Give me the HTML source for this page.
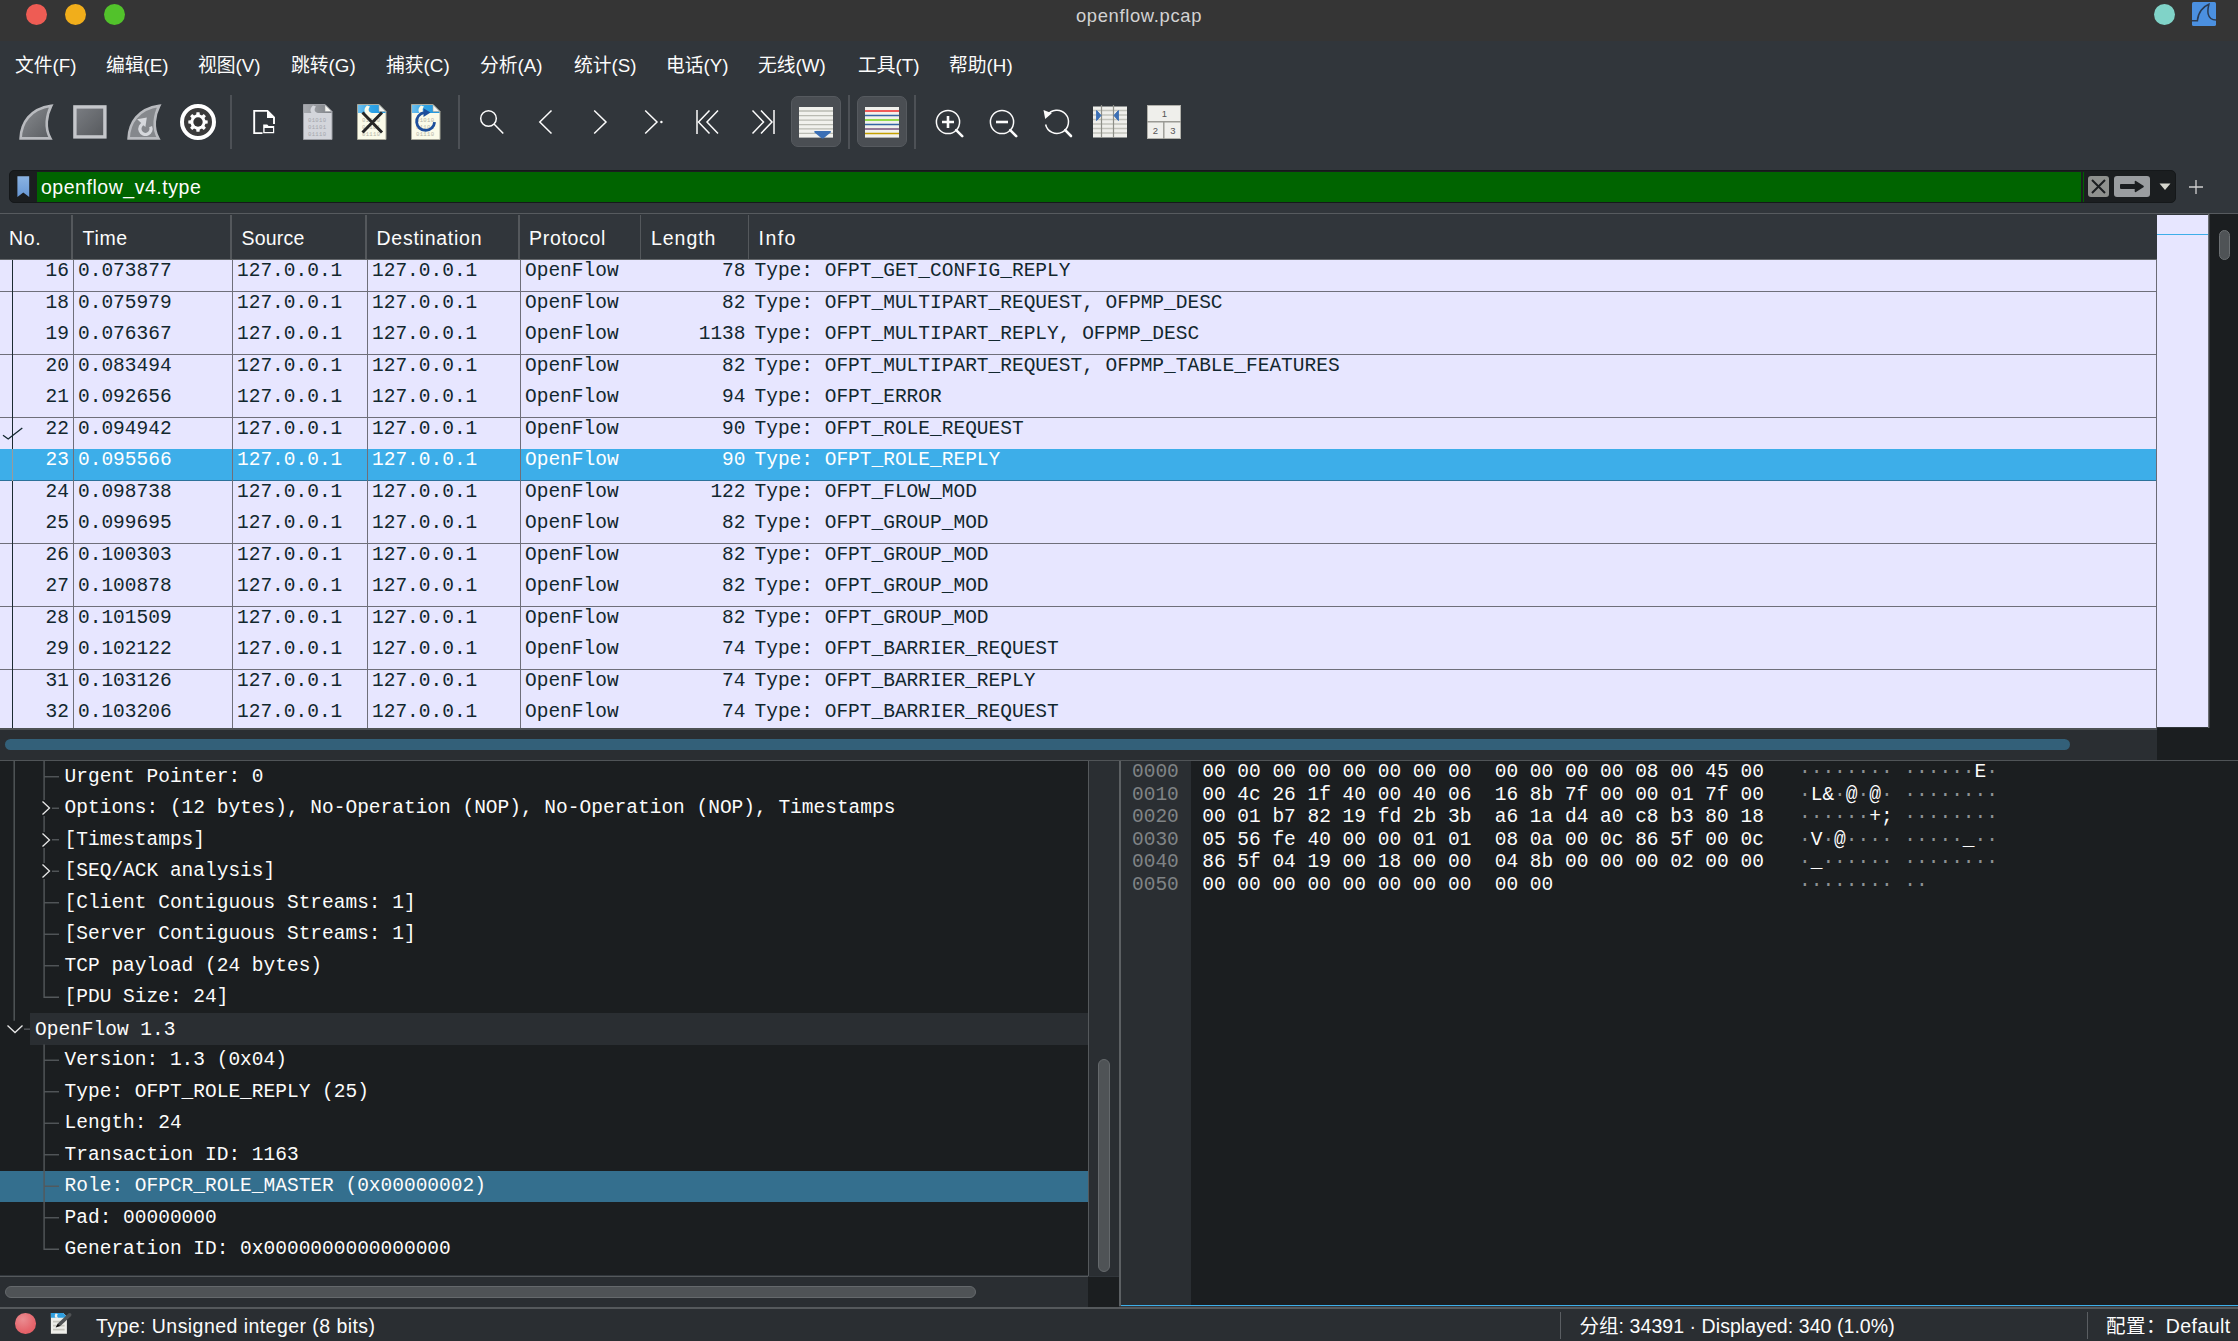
<!DOCTYPE html>
<html lang="zh-CN"><head><meta charset="utf-8"><title>openflow.pcap</title>
<style>
html,body{margin:0;padding:0}
body{width:2238px;height:1341px;overflow:hidden;background:#31363b;position:relative;
 font-family:"Liberation Sans","Noto Sans CJK SC",sans-serif;font-size:19.5px;color:#fcfcfc;letter-spacing:0.45px}
i,b,u{font-style:normal;font-weight:normal;text-decoration:none}
div,span,i,b,svg{position:absolute;box-sizing:border-box}
/* title */
#titlebar{left:0;top:0;width:2238px;height:41px;background:#353535}
.tl{top:3.5px;margin-left:0.5px;width:21px;height:21px;border-radius:50%}
#title{left:0;width:2238px;top:3px;height:26px;line-height:26px;text-align:center;font-size:18.4px;color:#d2d2d2;letter-spacing:0.65px;padding-left:40px}
#wsicon{left:2192px;top:2px}
/* menubar */
#menubar{left:0;top:41px;width:2238px;height:48px}
.mi{top:10.7px;height:28px;line-height:28px;white-space:nowrap;font-size:18.8px;letter-spacing:0}
/* toolbar */
#toolbar{left:0;top:89px;width:2238px;height:70px}
/* filter */
#filterbar{left:0;top:165px;width:2238px;height:44px}
#fbox{left:9px;top:5px;width:2167.4px;height:33px;background:#1b1e20;border:1px solid #15181a;border-radius:5px}
#bm{left:6.5px;top:5.2px}
#fgreen{left:27px;top:1px;width:2044.2px;height:30px;background:#006400}
#fgreen:after{content:"";position:absolute;left:2045.6px;top:0;width:1.2px;height:30px;background:#006400}
#ftext{left:4px;top:1.2px;height:30px;line-height:29px;white-space:nowrap;font-size:19.5px;letter-spacing:0.53px}
#fx{left:2078px;top:5px;width:21px;height:21px;background:#8f918e;border-radius:3px}
#fgo{left:2104px;top:5px;width:36px;height:21px;background:#9a9da0;border-radius:3px}
#fdd{left:2149px;top:12px}
#fplus{left:2188px;top:14px}
/* packet list */
#topline{left:0;top:212.8px;width:2238px;height:1.5px;background:#575b5f;z-index:3}
#plist{left:0;top:214px;width:2157px;height:514px;overflow:hidden}
#phead{left:0;top:0;width:2157px;height:46px;background:#31363b;border-bottom:1px solid #63676a}
.ht{top:10px;height:28px;line-height:28px;white-space:nowrap}
.hs{top:1px;width:1.6px;height:44px;background:#54585c}
#prows{left:0;top:46px;width:2157px;height:468px;background:#e7e6ff;overflow:hidden;
 font-family:"Liberation Mono",monospace;font-size:19.5px;letter-spacing:0;color:#12272e;border-right:1px solid #6b6b75}
.pr{left:0;width:2156px;height:31.5px;line-height:22px;white-space:pre}
.pr.sep{border-bottom:1px solid #6f6f7a}
.pr.sel{background:#3daee9;color:#fff;border-bottom-color:#2c729b}
.pr span{top:0}
.c0{right:2087px}.c1{left:78px}.c2{left:237px}.c3{left:372px}.c4{left:525px}.c5{right:1410.5px}.c6{left:754.5px}
.vl{top:0;width:1px;height:469px;background:#6f6f7a}
#relline{left:11.9px;top:0;width:1.3px;height:469px;background:#1c2b33}
#relsel{left:11.9px;top:189px;width:1.3px;height:31.5px;background:#9a9a9a}
#tick{left:0;top:167px}
#minimap{left:2157px;top:215px;width:51.2px;height:512.4px;background:#e7e6ff}
#minimap i{left:0;top:19px;width:51px;height:1.2px;background:#3daee9}
#pvs{left:2208px;top:214px;width:30px;height:515px;background:linear-gradient(to right,#8a8c93 0,#4a4d50 1px,#25282a 2px,#1b1e20 2.5px)}
#pvs i{left:10.6px;top:16px;width:11.6px;height:30px;border-radius:6px;background:#4f5356;border:1px solid #6c7073}
#phs{left:0;top:728px;width:2156.5px;height:32px;background:#2a2e32;border-top:2px solid #4d5154}
#pcorner{left:2156.5px;top:727.5px;width:82px;height:33px;background:#1b1e20}
#phs i{left:5px;top:8.8px;width:2065px;height:11.5px;border-radius:6px;background:#336079}
/* details */
#details{left:0;top:760px;width:1088px;height:515px;background:#1b1e20;overflow:hidden;
 font-family:"Liberation Mono",monospace;font-size:19.5px;letter-spacing:0;color:#fcfcfc;border-top:1px solid #45494d}
.tr{left:0;width:1088px;height:31.5px;line-height:31.5px;white-space:pre}
.tr.tsel{background:#346f8e}
.hdrbg{left:30px;top:0;width:1058px;height:31.5px;background:#2a2e32}
.tt{top:0.9px}
.l2{left:64.6px}.l1{left:35px;top:1.7px}
#tlines{left:0;top:0}
.arr{}
#dvline{left:1088px;top:760px;width:1px;height:516px;background:#55595c}
#dvs{left:1089px;top:760px;width:30px;height:516px;background:#2a2e32}
#dvs i{left:9px;top:299px;width:12px;height:212.6px;border-radius:6px;background:#4f5356;border:1px solid #65696c}
#splitline{left:1119px;top:760px;width:2px;height:546px;background:#5c6063}
#dhs{left:0;top:1276px;width:1088px;height:32px;background:#2a2e32;border-top:1px solid #55595c}
#dhs i{left:5px;top:9.2px;width:971px;height:11.5px;border-radius:6px;background:#4f5356;border:1px solid #65696c}
#dcorner{left:1088px;top:1277px;width:31px;height:30px;background:#1b1e20}
/* hex */
#hex{left:1121px;top:760px;width:1117px;height:545px;background:#1b1e20;overflow:hidden;
 font-family:"Liberation Mono",monospace;font-size:19.5px;letter-spacing:0;color:#fcfcfc;border-top:1px solid #45494d}
#hexoffbg{left:0;top:0;width:70px;height:545px;background:#2a2e32}
.hr{left:0;width:1117px;height:22.5px;line-height:22.5px;white-space:pre}
.hr span{top:0}
.ho{left:11px;color:#808486}
.hb{left:81.2px}
.ha{left:678px}
.ha u{color:#8d9193}
#hexblue{left:1121px;top:1305px;width:1117px;height:1.1px;background:#3daee9}
/* status */
#statusline{left:0;top:1307px;width:2238px;height:1.5px;background:#55595c}
#status{left:0;top:1309px;width:2238px;height:32px;background:#2a2e32}
#reddot{left:15.2px;top:4.1px;width:20.6px;height:20.6px;border-radius:50%;background:radial-gradient(circle at 38% 30%,#ea8d91,#e5686f 55%,#e1545c)}
#sedit{left:50px;top:3px}
#stext{left:96px;top:2px;height:30px;line-height:30px;white-space:nowrap}
.ss{top:3px;width:1.2px;height:27px;background:#5a5e62}
#spk{left:1579.5px;top:2px;height:30px;line-height:30px;white-space:nowrap;letter-spacing:0.06px}
#sprof{left:2106px;top:2px;height:30px;line-height:30px;white-space:nowrap}
.tsep{top:6px;width:2px;height:54px;background:#4d5156}
.tbtn{width:50px;height:51px;border-radius:7px;background:#4a4e53;border:1px solid #565a5f}
#midline{left:0;top:760px;width:2238px;height:1.2px;background:#505457}

</style></head>
<body>
<div id="titlebar">
<span class="tl" style="left:25px;background:#ee5c54"></span>
<span class="tl" style="left:64px;background:#f1ae1b"></span>
<span class="tl" style="left:103px;background:#52c22b"></span>
<div id="title">openflow.pcap</div>
<span class="tl" style="left:2153.9px;top:4px;background:#80d3c8"></span>
<svg id="wsicon" width="24" height="24" viewBox="0 0 24 24"><rect x="0" y="0" width="24" height="24" rx="1.6" fill="#4b90e0"/><path d="M0 18.8 H5.4 C6 10.5 11 4.5 16.9 2.2 C15.4 8 14.2 17.6 24 18.1" fill="none" stroke="#2a3b52" stroke-width="1.5"/></svg>
</div>
<div id="menubar"><span class="mi" style="left:15px">文件(F)</span><span class="mi" style="left:106px">编辑(E)</span><span class="mi" style="left:198px">视图(V)</span><span class="mi" style="left:291px">跳转(G)</span><span class="mi" style="left:386px">捕获(C)</span><span class="mi" style="left:480px">分析(A)</span><span class="mi" style="left:574px">统计(S)</span><span class="mi" style="left:666px">电话(Y)</span><span class="mi" style="left:758px">无线(W)</span><span class="mi" style="left:858px">工具(T)</span><span class="mi" style="left:949px">帮助(H)</span></div>
<div id="toolbar">
<svg width="0" height="0" style="left:0;top:0"><defs>
<linearGradient id="gfin" x1="0" y1="0" x2="1" y2="1"><stop offset="0" stop-color="#8a8d91"/><stop offset="1" stop-color="#5a5d61"/></linearGradient>
<linearGradient id="gsq" x1="0" y1="0" x2="1" y2="1"><stop offset="0" stop-color="#7b7e83"/><stop offset="1" stop-color="#55585c"/></linearGradient>
<linearGradient id="gblue" x1="0" y1="0" x2="1" y2="0"><stop offset="0" stop-color="#6fc0ee"/><stop offset="0.5" stop-color="#2ea3e6"/><stop offset="1" stop-color="#2396dc"/></linearGradient>
<linearGradient id="ggray" x1="0" y1="0" x2="1" y2="0"><stop offset="0" stop-color="#a8abb0"/><stop offset="1" stop-color="#7f8287"/></linearGradient>
</defs></svg>
<svg style="left:18px;top:14px" width="36" height="38" viewBox="0 0 36 38" ><path d="M2.6 35.4 C3.2 20 12 5.8 33.2 2.8 C28.4 12 26.4 25 32.4 35.4 Z" fill="url(#gfin)" stroke="#b9bbbf" stroke-width="2.6" stroke-linejoin="miter" stroke-miterlimit="2.4"/></svg>
<svg style="left:73px;top:16px" width="34" height="34" viewBox="0 0 34 34" ><rect x="1.9" y="1.9" width="30" height="30" fill="url(#gsq)" stroke="#c5c7cb" stroke-width="3.4"/></svg>
<svg style="left:126px;top:14px" width="36" height="38" viewBox="0 0 36 38" ><path d="M2.6 35.4 C3.2 20 12 5.8 33.2 2.8 C28.4 12 26.4 25 32.4 35.4 Z" fill="#85888c" stroke="#b9bbbf" stroke-width="2.6" stroke-miterlimit="2.4"/><path d="M17.6 20.6 A5.6 5.6 0 1 0 24.6 23.6" fill="none" stroke="#d6d8dc" stroke-width="3.2"/><path d="M11.2 16.2 L20.8 14.6 L19.4 24 Z" fill="#d6d8dc"/></svg>
<svg style="left:179px;top:14px" width="38" height="38" viewBox="0 0 38 38" ><circle cx="19" cy="19" r="16" fill="#3b3b3b" stroke="#ffffff" stroke-width="4"/><path d="M28.68 17.47 L28.68 20.53 L26.39 20.77 L25.48 22.97 L26.93 24.76 L24.76 26.93 L22.97 25.48 L20.77 26.39 L20.53 28.68 L17.47 28.68 L17.23 26.39 L15.03 25.48 L13.24 26.93 L11.07 24.76 L12.52 22.97 L11.61 20.77 L9.32 20.53 L9.32 17.47 L11.61 17.23 L12.52 15.03 L11.07 13.24 L13.24 11.07 L15.03 12.52 L17.23 11.61 L17.47 9.32 L20.53 9.32 L20.77 11.61 L22.97 12.52 L24.76 11.07 L26.93 13.24 L25.48 15.03 L26.39 17.23 Z" fill="#fff"/><circle cx="19" cy="19" r="4.7" fill="#333"/></svg>
<i class="tsep" style="left:229.8px"></i>
<svg style="left:252px;top:20px" width="24" height="26" viewBox="0 0 24 26" ><path d="M10.5 24.1 H2.2 V1.9 H15.5 L22 8.4 V15" fill="none" stroke="#fff" stroke-width="1.9"/><path d="M15 1.5 L22.5 9 H15 Z" fill="#fff"/><path d="M11.2 24.2 V15.6 H15.2 L16.6 17 H22.2 V24.2 Z M12.6 19 V23 H21 V19 Z" fill="#fff" fill-rule="evenodd"/></svg>
<svg style="left:303px;top:15px" width="30" height="36" viewBox="0 0 30 36" ><path d="M0.5 0.5 H22 L29 7.5 V35.5 H0.5 Z" fill="#d3d5db" stroke="#9c9ea4" stroke-width="1"/><path d="M1 1 H22 L28.5 7.5 V9 H1 Z" fill="url(#ggray)"/><path d="M10 1.5 C7 4 7 7 8.5 9 H15 C12.5 8.5 10 6 13 2.5 Z" fill="#d3d5db"/><path d="M22 0.8 L28.7 7.5 H22 Z" fill="#f4f4f0" stroke="#9c9ea4" stroke-width="0.6"/><g font-family="Liberation Mono,monospace" font-size="5.6" fill="#a4a6ac" letter-spacing="0.3"><text x="5" y="18">01010</text><text x="5" y="25">01101</text><text x="5" y="32">01110</text></g></svg>
<svg style="left:357px;top:15px" width="30" height="36" viewBox="0 0 30 36" ><path d="M0.5 0.5 H22 L29 7.5 V35.5 H0.5 Z" fill="#fbfbe9" stroke="#a8a89a" stroke-width="1"/><path d="M1 1 H22 L28.5 7.5 V9 H1 Z" fill="url(#gblue)"/><path d="M10 1.5 C7 4 7 7 8.5 9 H15 C12.5 8.5 10 6 13 2.5 Z" fill="#fbfbe9"/><path d="M22 0.8 L28.7 7.5 H22 Z" fill="#f4f4f0" stroke="#a8a89a" stroke-width="0.6"/><g font-family="Liberation Mono,monospace" font-size="5.6" fill="#b4b4a6" letter-spacing="0.3"><text x="5" y="18">01010</text><text x="5" y="25">01101</text><text x="5" y="32">01110</text></g><path d="M5.5 8.5 L25 28.5 M25 8.5 L5.5 28.5" stroke="#262626" stroke-width="3" stroke-linecap="butt"/></svg>
<svg style="left:411px;top:15px" width="30" height="36" viewBox="0 0 30 36" ><path d="M0.5 0.5 H22 L29 7.5 V35.5 H0.5 Z" fill="#fbfbe9" stroke="#a8a89a" stroke-width="1"/><path d="M1 1 H22 L28.5 7.5 V9 H1 Z" fill="url(#gblue)"/><path d="M10 1.5 C7 4 7 7 8.5 9 H15 C12.5 8.5 10 6 13 2.5 Z" fill="#fbfbe9"/><path d="M22 0.8 L28.7 7.5 H22 Z" fill="#f4f4f0" stroke="#a8a89a" stroke-width="0.6"/><g font-family="Liberation Mono,monospace" font-size="5.6" fill="#b4b4a6" letter-spacing="0.3"><text x="5" y="18">01010</text><text x="5" y="25">01101</text><text x="5" y="32">01110</text></g><path d="M13 8.6 A9 9 0 1 0 23.6 18.2" fill="none" stroke="#1d4f9c" stroke-width="2.8"/><path d="M12.5 4.2 L19.5 8.5 L12.5 13 Z" fill="#1d4f9c"/></svg>
<i class="tsep" style="left:458px"></i>
<svg style="left:478px;top:19px" width="28" height="28" viewBox="0 0 28 28" ><circle cx="10.5" cy="10.5" r="7.8" fill="none" stroke="#fcfcfc" stroke-width="1.5"/><path d="M16 16 L25.3 25.5" stroke="#fcfcfc" stroke-width="1.5"/></svg>
<svg style="left:536px;top:19px" width="20" height="28" viewBox="0 0 20 28" ><path d="M15.5 2.5 L3.8 14 L15.5 25.5" fill="none" stroke="#fcfcfc" stroke-width="1.5"/></svg>
<svg style="left:590px;top:19px" width="20" height="28" viewBox="0 0 20 28" ><path d="M4.2 2.5 L16 14 L4.2 25.5" fill="none" stroke="#fcfcfc" stroke-width="1.5"/></svg>
<svg style="left:642px;top:19px" width="24" height="28" viewBox="0 0 24 28" ><path d="M3.2 2.5 L15 14 L3.2 25.5" fill="none" stroke="#fcfcfc" stroke-width="1.5"/><circle cx="19.4" cy="14" r="1.2" fill="#fcfcfc"/></svg>
<svg style="left:694px;top:19px" width="28" height="28" viewBox="0 0 28 28" ><path d="M3 2 V26" stroke="#fcfcfc" stroke-width="1.5"/><path d="M15.5 2.5 L4.5 14 L15.5 25.5 M24 2.5 L13 14 L24 25.5" fill="none" stroke="#fcfcfc" stroke-width="1.5"/></svg>
<svg style="left:750px;top:19px" width="28" height="28" viewBox="0 0 28 28" ><path d="M24 2 V26" stroke="#fcfcfc" stroke-width="1.5"/><path d="M2.5 2.5 L13.5 14 L2.5 25.5 M11 2.5 L22 14 L11 25.5" fill="none" stroke="#fcfcfc" stroke-width="1.5"/></svg>
<b class="tbtn" style="left:791px;top:7.4px"></b>
<svg style="left:799px;top:17.700000000000003px" width="34" height="32" viewBox="0 0 34 32" ><rect x="0" y="0" width="34" height="30.6" fill="#f1f1ed"/><path d="M0 4.0 H34" stroke="#b9bab2" stroke-width="1.4"/><path d="M0 8.6 H34" stroke="#b9bab2" stroke-width="1.4"/><path d="M0 13.1 H34" stroke="#b9bab2" stroke-width="1.4"/><path d="M0 17.6 H34" stroke="#b9bab2" stroke-width="1.4"/><path d="M0 21.9 H34" stroke="#b9bab2" stroke-width="1.4"/><path d="M0 26.4 H34" stroke="#b9bab2" stroke-width="1.4"/><path d="M16.2 24 H31 Q32.8 24 31.6 25.4 L25 31 Q23.6 32 22.2 31 L15.6 25.4 Q14.4 24 16.2 24 Z" fill="#3b6fb5"/></svg>
<i class="tsep" style="left:848px"></i>
<b class="tbtn" style="left:857px;top:7.4px"></b>
<svg style="left:865px;top:17.700000000000003px" width="34" height="31" viewBox="0 0 34 31" ><rect x="0" y="0" width="34" height="30.6" fill="#f1f1ed"/><path d="M0 4.0 H34" stroke="#ef2929" stroke-width="1.5"/><path d="M0 8.6 H34" stroke="#3465a4" stroke-width="1.5"/><path d="M0 13.1 H34" stroke="#73d216" stroke-width="1.5"/><path d="M0 17.6 H34" stroke="#3465a4" stroke-width="1.5"/><path d="M0 21.9 H34" stroke="#75507b" stroke-width="1.5"/><path d="M0 26.4 H34" stroke="#c4a000" stroke-width="1.5"/></svg>
<i class="tsep" style="left:914px"></i>
<svg style="left:934px;top:19px" width="30" height="30" viewBox="0 0 30 30" ><circle cx="14" cy="14" r="11.6" fill="none" stroke="#fcfcfc" stroke-width="1.5"/><path d="M22.2 22.2 L28.2 28.2" stroke="#fcfcfc" stroke-width="2.6" stroke-linecap="round"/><path d="M8 14 H20 M14 8 V20" stroke="#fcfcfc" stroke-width="2.6"/></svg>
<svg style="left:988px;top:19px" width="30" height="30" viewBox="0 0 30 30" ><circle cx="14" cy="14" r="11.6" fill="none" stroke="#fcfcfc" stroke-width="1.5"/><path d="M22.2 22.2 L28.2 28.2" stroke="#fcfcfc" stroke-width="2.6" stroke-linecap="round"/><path d="M8 14 H20" stroke="#fcfcfc" stroke-width="2.6"/></svg>
<svg style="left:1041px;top:17px" width="32" height="32" viewBox="0 0 32 32" ><path d="M6.2 9.5 A11.6 11.6 0 1 1 4.6 18.5" fill="none" stroke="#fcfcfc" stroke-width="1.5"/><path d="M2.5 4 L10.8 7.2 L4.2 13 Z" fill="#fcfcfc"/><path d="M24.2 24.2 L30 30" stroke="#fcfcfc" stroke-width="2.6" stroke-linecap="round"/></svg>
<svg style="left:1093px;top:16px" width="34" height="33" viewBox="0 0 34 33" ><rect x="0" y="1.5" width="34" height="31" fill="#efefeb"/><path d="M0 5.5 H34" stroke="#c2c3bb" stroke-width="1.3"/><path d="M0 10 H34" stroke="#c2c3bb" stroke-width="1.3"/><path d="M0 14.5 H34" stroke="#c2c3bb" stroke-width="1.3"/><path d="M0 19 H34" stroke="#c2c3bb" stroke-width="1.3"/><path d="M0 23.5 H34" stroke="#c2c3bb" stroke-width="1.3"/><path d="M0 28 H34" stroke="#c2c3bb" stroke-width="1.3"/><path d="M8.5 0 V33 M20.5 0 V33" stroke="#8e8f88" stroke-width="1.2"/><path d="M3.6 5.5 L8 10.5 L3.6 15.5 Z M25.4 5.5 L21 10.5 L25.4 15.5 Z" fill="#3b6fb5" stroke="#3b6fb5" stroke-width="1" stroke-linejoin="round"/></svg>
<svg style="left:1147px;top:16px" width="34" height="34" viewBox="0 0 34 34" ><rect x="0.5" y="0.5" width="33" height="33" fill="#efefeb" stroke="#b0b0aa" stroke-width="1"/><path d="M0 16.8 H34 M16.8 16.8 V34" stroke="#9a9a94" stroke-width="1.4"/><g font-family="Liberation Sans,sans-serif" font-size="9.5" fill="#555" text-anchor="middle"><text x="17.5" y="12">1</text><text x="8.5" y="29">2</text><text x="26" y="29">3</text></g></svg>
</div>
<div id="filterbar">
<div id="fbox"><svg id="bm" width="13" height="22" viewBox="0 0 13 22"><defs><linearGradient id="gbm" x1="0" y1="0" x2="0" y2="1"><stop offset="0" stop-color="#8ab3e2"/><stop offset="1" stop-color="#6797d4"/></linearGradient></defs><path d="M0.4 0.3 H12.2 V21 L6.3 16.4 L0.4 21 Z" fill="url(#gbm)"/></svg>
<div id="fgreen"><span id="ftext">openflow_v4.type</span></div>
<div id="fx"><svg width="21" height="21" viewBox="0 0 21 21"><path d="M4 4 L17 17 M17 4 L4 17" stroke="#1b1e20" stroke-width="2" fill="none"/></svg></div>
<div id="fgo"><svg width="36" height="21" viewBox="0 0 36 21"><path d="M6.8 8.9 H21.5 V5.6 L29 10.5 L21.5 15.4 V12.1 H6.8 Z" fill="#1b1e20" stroke="#1b1e20" stroke-width="1.6" stroke-linejoin="round"/></svg></div>
<svg id="fdd" width="12" height="8" viewBox="0 0 12 8"><path d="M0.5 0.5 H11.5 L6 7 Z" fill="#d6d6ce"/></svg>
</div>
<svg id="fplus" width="16" height="16" viewBox="0 0 16 16"><path d="M8 1 V15 M1 8 H15" stroke="#d0d0d0" stroke-width="1.3" fill="none"/></svg>
</div>
<div id="topline"></div>
<div id="plist">
<div id="phead"><span class="ht" style="left:9px;letter-spacing:0.6px">No.</span><i class="hs" style="left:71.2px"></i><span class="ht" style="left:82.5px;letter-spacing:0.7px">Time</span><i class="hs" style="left:230.4px"></i><span class="ht" style="left:241.5px;letter-spacing:0.2px">Source</span><i class="hs" style="left:365.4px"></i><span class="ht" style="left:376.5px;letter-spacing:0.75px">Destination</span><i class="hs" style="left:518.2px"></i><span class="ht" style="left:529px;letter-spacing:0.7px">Protocol</span><i class="hs" style="left:639.8px"></i><span class="ht" style="left:651px;letter-spacing:0.95px">Length</span><i class="hs" style="left:747.7px"></i><span class="ht" style="left:758.6px;letter-spacing:1.4px">Info</span></div>
<div id="prows">
<div class="pr sep" style="top:0.0px"><span class="c0">16</span><span class="c1">0.073877</span><span class="c2">127.0.0.1</span><span class="c3">127.0.0.1</span><span class="c4">OpenFlow</span><span class="c5">78</span><span class="c6">Type: OFPT_GET_CONFIG_REPLY</span></div>
<div class="pr" style="top:31.5px"><span class="c0">18</span><span class="c1">0.075979</span><span class="c2">127.0.0.1</span><span class="c3">127.0.0.1</span><span class="c4">OpenFlow</span><span class="c5">82</span><span class="c6">Type: OFPT_MULTIPART_REQUEST, OFPMP_DESC</span></div>
<div class="pr sep" style="top:63.0px"><span class="c0">19</span><span class="c1">0.076367</span><span class="c2">127.0.0.1</span><span class="c3">127.0.0.1</span><span class="c4">OpenFlow</span><span class="c5">1138</span><span class="c6">Type: OFPT_MULTIPART_REPLY, OFPMP_DESC</span></div>
<div class="pr" style="top:94.5px"><span class="c0">20</span><span class="c1">0.083494</span><span class="c2">127.0.0.1</span><span class="c3">127.0.0.1</span><span class="c4">OpenFlow</span><span class="c5">82</span><span class="c6">Type: OFPT_MULTIPART_REQUEST, OFPMP_TABLE_FEATURES</span></div>
<div class="pr sep" style="top:126.0px"><span class="c0">21</span><span class="c1">0.092656</span><span class="c2">127.0.0.1</span><span class="c3">127.0.0.1</span><span class="c4">OpenFlow</span><span class="c5">94</span><span class="c6">Type: OFPT_ERROR</span></div>
<div class="pr" style="top:157.5px"><span class="c0">22</span><span class="c1">0.094942</span><span class="c2">127.0.0.1</span><span class="c3">127.0.0.1</span><span class="c4">OpenFlow</span><span class="c5">90</span><span class="c6">Type: OFPT_ROLE_REQUEST</span></div>
<div class="pr sel sep" style="top:189.0px"><span class="c0">23</span><span class="c1">0.095566</span><span class="c2">127.0.0.1</span><span class="c3">127.0.0.1</span><span class="c4">OpenFlow</span><span class="c5">90</span><span class="c6">Type: OFPT_ROLE_REPLY</span></div>
<div class="pr" style="top:220.5px"><span class="c0">24</span><span class="c1">0.098738</span><span class="c2">127.0.0.1</span><span class="c3">127.0.0.1</span><span class="c4">OpenFlow</span><span class="c5">122</span><span class="c6">Type: OFPT_FLOW_MOD</span></div>
<div class="pr sep" style="top:252.0px"><span class="c0">25</span><span class="c1">0.099695</span><span class="c2">127.0.0.1</span><span class="c3">127.0.0.1</span><span class="c4">OpenFlow</span><span class="c5">82</span><span class="c6">Type: OFPT_GROUP_MOD</span></div>
<div class="pr" style="top:283.5px"><span class="c0">26</span><span class="c1">0.100303</span><span class="c2">127.0.0.1</span><span class="c3">127.0.0.1</span><span class="c4">OpenFlow</span><span class="c5">82</span><span class="c6">Type: OFPT_GROUP_MOD</span></div>
<div class="pr sep" style="top:315.0px"><span class="c0">27</span><span class="c1">0.100878</span><span class="c2">127.0.0.1</span><span class="c3">127.0.0.1</span><span class="c4">OpenFlow</span><span class="c5">82</span><span class="c6">Type: OFPT_GROUP_MOD</span></div>
<div class="pr" style="top:346.5px"><span class="c0">28</span><span class="c1">0.101509</span><span class="c2">127.0.0.1</span><span class="c3">127.0.0.1</span><span class="c4">OpenFlow</span><span class="c5">82</span><span class="c6">Type: OFPT_GROUP_MOD</span></div>
<div class="pr sep" style="top:378.0px"><span class="c0">29</span><span class="c1">0.102122</span><span class="c2">127.0.0.1</span><span class="c3">127.0.0.1</span><span class="c4">OpenFlow</span><span class="c5">74</span><span class="c6">Type: OFPT_BARRIER_REQUEST</span></div>
<div class="pr" style="top:409.5px"><span class="c0">31</span><span class="c1">0.103126</span><span class="c2">127.0.0.1</span><span class="c3">127.0.0.1</span><span class="c4">OpenFlow</span><span class="c5">74</span><span class="c6">Type: OFPT_BARRIER_REPLY</span></div>
<div class="pr" style="top:441.0px"><span class="c0">32</span><span class="c1">0.103206</span><span class="c2">127.0.0.1</span><span class="c3">127.0.0.1</span><span class="c4">OpenFlow</span><span class="c5">74</span><span class="c6">Type: OFPT_BARRIER_REQUEST</span></div>
<i class="vl" style="left:73px"></i><i class="vl" style="left:232px"></i><i class="vl" style="left:367px"></i><i class="vl" style="left:520px"></i><i id="relline"></i><i id="relsel"></i><svg id="tick" width="24" height="16" viewBox="0 0 24 16"><path d="M3 8.2 L8.2 12 L22.3 1" stroke="#12272e" stroke-width="1.3" fill="none"/></svg></div>
</div>
<div id="minimap"><i></i></div><div id="pvs"><i></i></div>
<div id="phs"><i></i></div><div id="pcorner"></div>
<div id="details">
<div class="tr" style="top:0px"><span class="tt l2">Urgent Pointer: 0</span></div>
<div class="tr" style="top:31.5px"><span class="tt l2">Options: (12 bytes), No-Operation (NOP), No-Operation (NOP), Timestamps</span></div>
<div class="tr" style="top:63px"><span class="tt l2">[Timestamps]</span></div>
<div class="tr" style="top:94.5px"><span class="tt l2">[SEQ/ACK analysis]</span></div>
<div class="tr" style="top:126px"><span class="tt l2">[Client Contiguous Streams: 1]</span></div>
<div class="tr" style="top:157.5px"><span class="tt l2">[Server Contiguous Streams: 1]</span></div>
<div class="tr" style="top:189px"><span class="tt l2">TCP payload (24 bytes)</span></div>
<div class="tr" style="top:220.5px"><span class="tt l2">[PDU Size: 24]</span></div>
<div class="tr top" style="top:252px"><b class="hdrbg"></b><span class="tt l1">OpenFlow 1.3</span></div>
<div class="tr" style="top:283.5px"><span class="tt l2">Version: 1.3 (0x04)</span></div>
<div class="tr" style="top:315px"><span class="tt l2">Type: OFPT_ROLE_REPLY (25)</span></div>
<div class="tr" style="top:346.5px"><span class="tt l2">Length: 24</span></div>
<div class="tr" style="top:378px"><span class="tt l2">Transaction ID: 1163</span></div>
<div class="tr tsel" style="top:409.5px"><span class="tt l2">Role: OFPCR_ROLE_MASTER (0x00000002)</span></div>
<div class="tr" style="top:441px"><span class="tt l2">Pad: 00000000</span></div>
<div class="tr" style="top:472.5px"><span class="tt l2">Generation ID: 0x0000000000000000</span></div>
<svg id="tlines" width="1088" height="515" viewBox="0 0 1088 515"><path d="M14.2 0 V259.75" stroke="#54585b" stroke-width="1.4" fill="none"/><path d="M22.5 268.15 H30" stroke="#54585b" stroke-width="1.4" fill="none"/><path d="M44.1 0 V236.25 H59" stroke="#54585b" stroke-width="1.4" fill="none"/><path d="M44.1 15.75 H59" stroke="#54585b" stroke-width="1.4" fill="none"/><path d="M44.1 141.75 H59" stroke="#54585b" stroke-width="1.4" fill="none"/><path d="M44.1 173.25 H59" stroke="#54585b" stroke-width="1.4" fill="none"/><path d="M44.1 204.75 H59" stroke="#54585b" stroke-width="1.4" fill="none"/><path d="M51 47.25 H59" stroke="#54585b" stroke-width="1.4" fill="none"/><path d="M51 78.75 H59" stroke="#54585b" stroke-width="1.4" fill="none"/><path d="M51 110.25 H59" stroke="#54585b" stroke-width="1.4" fill="none"/><path d="M44.1 283.5 V488.25 H59" stroke="#54585b" stroke-width="1.4" fill="none"/><path d="M44.1 299.25 H59" stroke="#54585b" stroke-width="1.4" fill="none"/><path d="M44.1 330.75 H59" stroke="#54585b" stroke-width="1.4" fill="none"/><path d="M44.1 362.25 H59" stroke="#54585b" stroke-width="1.4" fill="none"/><path d="M44.1 393.75 H59" stroke="#54585b" stroke-width="1.4" fill="none"/><path d="M44.1 425.25 H59" stroke="#54585b" stroke-width="1.4" fill="none"/><path d="M44.1 456.75 H59" stroke="#54585b" stroke-width="1.4" fill="none"/></svg><svg class="arr" style="left:40px;top:39.25px" width="12" height="16" viewBox="0 0 12 16"><rect width="12" height="16" fill="#1b1e20"/><path d="M2.5 1.5 L9.5 8 L2.5 14.5" stroke="#e8e8e8" stroke-width="1.3" fill="none"/></svg><svg class="arr" style="left:40px;top:70.75px" width="12" height="16" viewBox="0 0 12 16"><rect width="12" height="16" fill="#1b1e20"/><path d="M2.5 1.5 L9.5 8 L2.5 14.5" stroke="#e8e8e8" stroke-width="1.3" fill="none"/></svg><svg class="arr" style="left:40px;top:102.25px" width="12" height="16" viewBox="0 0 12 16"><rect width="12" height="16" fill="#1b1e20"/><path d="M2.5 1.5 L9.5 8 L2.5 14.5" stroke="#e8e8e8" stroke-width="1.3" fill="none"/></svg><svg class="arr" style="left:6px;top:261.75px" width="18" height="12" viewBox="0 0 18 12"><rect width="18" height="12" fill="#1b1e20"/><path d="M1.5 2.5 L9 9.5 L16.5 2.5" stroke="#e8e8e8" stroke-width="1.3" fill="none"/></svg></div>
<i id="dvline"></i><div id="dvs"><i></i></div><i id="splitline"></i><div id="dhs"><i></i></div><div id="dcorner"></div>
<div id="hex"><div id="hexoffbg"></div>
<div class="hr" style="top:0px"><span class="ho">0000</span><span class="hb">00 00 00 00 00 00 00 00  00 00 00 00 08 00 45 00</span><span class="ha"><u>········</u> <u>······</u>E<u>·</u></span></div>
<div class="hr" style="top:22.5px"><span class="ho">0010</span><span class="hb">00 4c 26 1f 40 00 40 06  16 8b 7f 00 00 01 7f 00</span><span class="ha"><u>·</u>L&amp;<u>·</u>@<u>·</u>@<u>·</u> <u>········</u></span></div>
<div class="hr" style="top:45px"><span class="ho">0020</span><span class="hb">00 01 b7 82 19 fd 2b 3b  a6 1a d4 a0 c8 b3 80 18</span><span class="ha"><u>······</u>+; <u>········</u></span></div>
<div class="hr" style="top:67.5px"><span class="ho">0030</span><span class="hb">05 56 fe 40 00 00 01 01  08 0a 00 0c 86 5f 00 0c</span><span class="ha"><u>·</u>V<u>·</u>@<u>····</u> <u>·····</u>_<u>··</u></span></div>
<div class="hr" style="top:90px"><span class="ho">0040</span><span class="hb">86 5f 04 19 00 18 00 00  04 8b 00 00 00 02 00 00</span><span class="ha"><u>·</u>_<u>······</u> <u>········</u></span></div>
<div class="hr" style="top:112.5px"><span class="ho">0050</span><span class="hb">00 00 00 00 00 00 00 00  00 00</span><span class="ha"><u>········</u> <u>··</u></span></div>
</div><i id="hexblue"></i><i id="midline"></i>
<div id="statusline"></div>
<div id="status">
<span id="reddot"></span>
<svg id="sedit" width="24" height="24" viewBox="0 0 24 24"><path d="M0.9 1.1 H13.2 L16.9 4.8 V21.8 H0.9 Z" fill="#eeeeea"/><path d="M0.9 1.1 H13.2 L16.9 4.8 V5.8 H0.9 Z" fill="#2f9fe0"/><path d="M5.6 1.6 C4.4 3.4 4.6 4.8 5.4 5.8 H8.2 C7.2 5 6.6 3.6 7.8 2 Z" fill="#eeeeea"/><path d="M3 9.6 H14.6 M3 13.6 H14.6 M3 17.6 H14.6" stroke="#c6c6be" stroke-width="1.6"/><path d="M18.4 1.4 L21 3.9 L10.4 14 L7.8 11.4 Z" fill="#4f5254"/><circle cx="19.7" cy="2.7" r="1.8" fill="#4f5254"/><path d="M7.8 11.4 L10.4 14 L5.6 15.6 Z" fill="#0a0a0a"/></svg>
<span id="stext">Type: Unsigned integer (8 bits)</span>
<i class="ss" style="left:1560.2px"></i>
<span id="spk">分组: 34391 · Displayed: 340 (1.0%)</span>
<i class="ss" style="left:2086.8px"></i>
<span id="sprof">配置<u style="letter-spacing:-5.6px">：</u> Default</span>
</div>
</body></html>
